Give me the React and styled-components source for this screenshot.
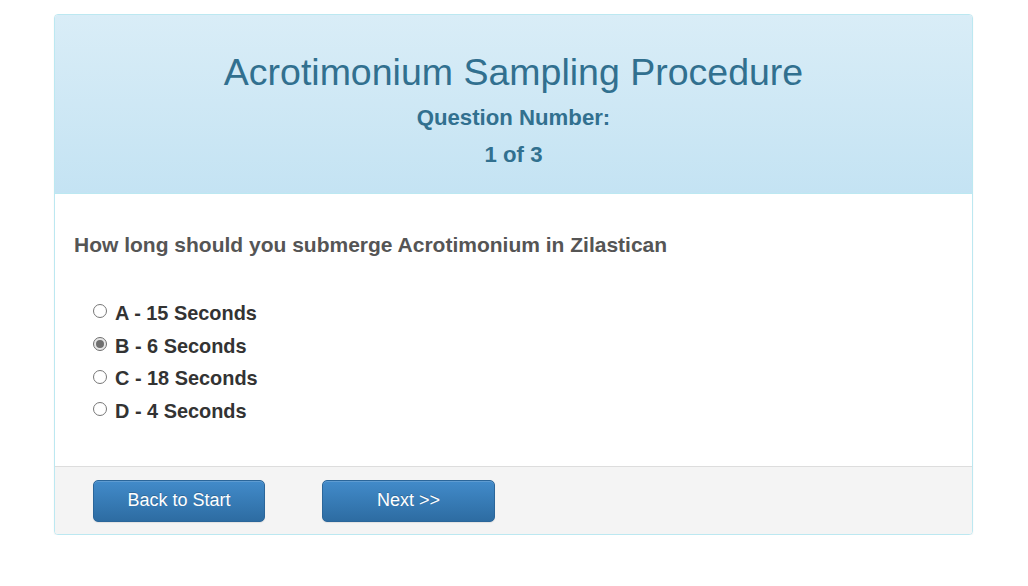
import React, { useState } from "react";
import styled, { createGlobalStyle } from "styled-components";

const Global = createGlobalStyle`
  html, body { margin: 0; padding: 0; background: #fff; }
  body { font-family: "Liberation Sans", Arial, Helvetica, sans-serif; color: #333; }
  * { box-sizing: border-box; }
`;

const Page = styled.div`
  padding-top: 14px;
  padding-left: 54px;
  padding-right: 55px;
`;

const Panel = styled.div`
  border: 1px solid #bce8f1;
  border-radius: 4px;
  background: #fff;
  box-shadow: 0 1px 2px rgba(0, 0, 0, 0.05);
  overflow: hidden;
`;

const Heading = styled.div`
  background-image: linear-gradient(to bottom, #d9edf7 0%, #c4e3f3 100%);
  color: #31708f;
  text-align: center;
  height: 179px;
  padding-top: 35px;
  border-bottom: 1px solid #bce8f1;
`;

const Title = styled.h1`
  margin: 0;
  font-size: 37.5px;
  font-weight: 400;
  line-height: 44px;
`;

const Sub = styled.div`
  font-size: 22.2px;
  font-weight: 700;
  line-height: 37px;
  margin-top: ${(p) => p.$mt || 0}px;
`;

const Body = styled.div`
  height: 272px;
  padding: 37px 19px 0;
`;

const Question = styled.div`
  font-size: 21px;
  font-weight: 700;
  color: #555;
  line-height: 28px;
`;

const Options = styled.div`
  margin-top: 38px;
  padding-left: 19px;
  display: flex;
  flex-direction: column;
`;

const Option = styled.label`
  display: flex;
  align-items: center;
  height: 32.7px;
  font-size: 19.9px;
  font-weight: 700;
  color: #333;
  cursor: pointer;
`;

const Radio = styled.input`
  appearance: none;
  width: 14px;
  height: 14px;
  margin: 0 8px 0 0;
  border: 1px solid #777;
  border-radius: 50%;
  background: #fff;
  position: relative;
  top: -2px;
  display: grid;
  place-items: center;
  &:checked::after {
    content: "";
    width: 8px;
    height: 8px;
    border-radius: 50%;
    background: #6e6e6e;
  }
  &:checked {
    border-color: #6e6e6e;
    background: #e6e6e6;
  }
`;

const Footer = styled.div`
  background: #f4f4f4;
  border-top: 1px solid #ddd;
  height: 68px;
  padding: 13px 38px 0;
  display: flex;
  gap: 57px;
`;

const Button = styled.button`
  width: ${(p) => p.$w}px;
  height: 42px;
  border: 1px solid #2b669a;
  border-radius: 5px;
  background-image: linear-gradient(to bottom, #428bca 0%, #2d6ca2 100%);
  color: #fff;
  font-family: "Liberation Sans", Arial, sans-serif;
  font-size: 18px;
  line-height: 38px;
  text-shadow: 0 -1px 0 rgba(0, 0, 0, 0.2);
  box-shadow: inset 0 1px 0 rgba(255, 255, 255, 0.15), 0 1px 1px rgba(0, 0, 0, 0.075);
  cursor: pointer;
  padding: 0 0 3px;
`;

const options = ["A - 15 Seconds", "B - 6 Seconds", "C - 18 Seconds", "D - 4 Seconds"];

export default function App() {
  const [sel, setSel] = useState(1);
  return (
    <>
      <Global />
      <Page>
        <Panel>
          <Heading>
            <Title>Acrotimonium Sampling Procedure</Title>
            <Sub $mt={5}>Question Number:</Sub>
            <Sub>1 of 3</Sub>
          </Heading>
          <Body>
            <Question>How long should you submerge Acrotimonium in Zilastican</Question>
            <Options>
              {options.map((o, i) => (
                <Option key={o}>
                  <Radio type="radio" name="q" checked={sel === i} onChange={() => setSel(i)} />
                  {o}
                </Option>
              ))}
            </Options>
          </Body>
          <Footer>
            <Button $w={172}>Back to Start</Button>
            <Button $w={173}>Next &gt;&gt;</Button>
          </Footer>
        </Panel>
      </Page>
    </>
  );
}
